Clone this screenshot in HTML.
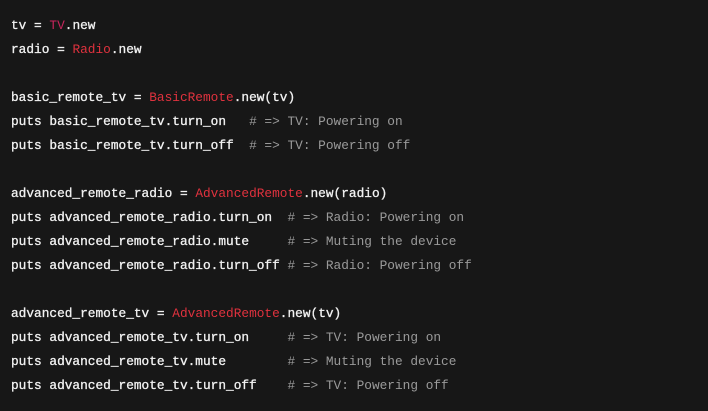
<!DOCTYPE html>
<html><head><style>
html,body{margin:0;padding:0;background:#171717;width:708px;height:411px;overflow:hidden}
pre{margin:0;position:absolute;left:11px;top:14px;font-family:"Liberation Mono",monospace;font-size:12.8px;line-height:24px;color:#f2f2f2;font-weight:normal;-webkit-text-stroke:0.3px #f2f2f2}
.k{color:#e0323e;-webkit-text-stroke:0}
.p{color:#c8245c;-webkit-text-stroke:0}
.c{color:#9a9a9a;-webkit-text-stroke:0}
</style></head><body><pre>tv = <span class="p">TV</span>.new
radio = <span class="k">Radio</span>.new

basic_remote_tv = <span class="k">BasicRemote</span>.new(tv)
puts basic_remote_tv.turn_on   <span class="c"># =&gt; TV: Powering on</span>
puts basic_remote_tv.turn_off  <span class="c"># =&gt; TV: Powering off</span>

advanced_remote_radio = <span class="k">AdvancedRemote</span>.new(radio)
puts advanced_remote_radio.turn_on  <span class="c"># =&gt; Radio: Powering on</span>
puts advanced_remote_radio.mute     <span class="c"># =&gt; Muting the device</span>
puts advanced_remote_radio.turn_off <span class="c"># =&gt; Radio: Powering off</span>

advanced_remote_tv = <span class="k">AdvancedRemote</span>.new(tv)
puts advanced_remote_tv.turn_on     <span class="c"># =&gt; TV: Powering on</span>
puts advanced_remote_tv.mute        <span class="c"># =&gt; Muting the device</span>
puts advanced_remote_tv.turn_off    <span class="c"># =&gt; TV: Powering off</span></pre></body></html>
